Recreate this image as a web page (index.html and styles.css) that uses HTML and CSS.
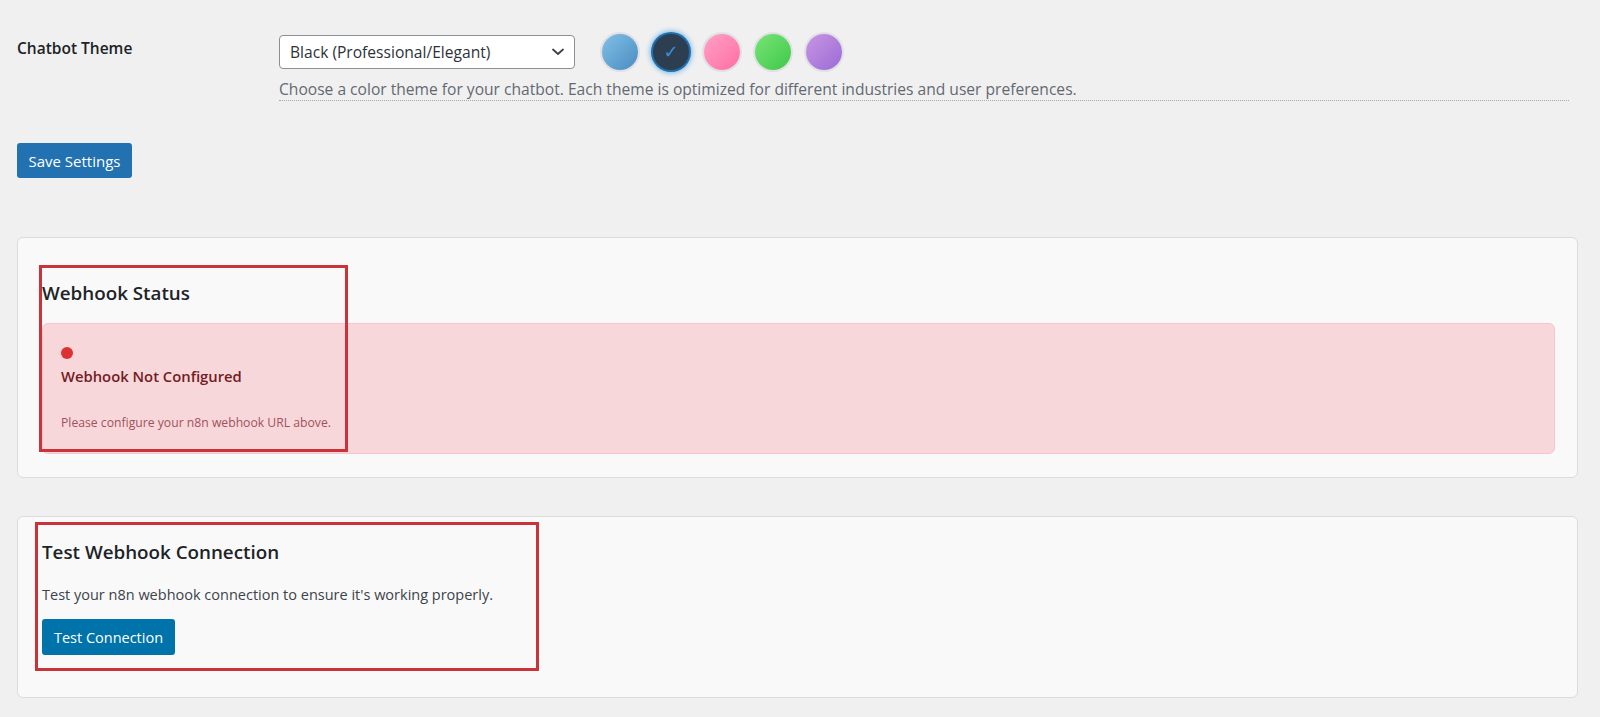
FILE: index.html
```html
<!DOCTYPE html>
<html lang="en">
<head>
<meta charset="utf-8">
<title>Chatbot Settings</title>
<link rel="stylesheet" href="styles.css">
</head>
<body>
<div class="wrap">
  <div class="form-row">
    <div class="label">Chatbot Theme</div>
    <div class="field">
      <div class="controls">
        <div class="select">
          <span>Black (Professional/Elegant)</span>
          <svg class="chev" width="12" height="8" viewBox="0 0 12 8"><path d="M1 1.5 L6 6 L11 1.5" fill="none" stroke="#3c434a" stroke-width="1.8" stroke-linecap="round" stroke-linejoin="round"/></svg>
        </div>
        <div class="swatches">
          <span class="swatch sw-blue"></span>
          <span class="swatch sw-black selected"><span class="check">✓</span></span>
          <span class="swatch sw-pink"></span>
          <span class="swatch sw-green"></span>
          <span class="swatch sw-purple"></span>
        </div>
      </div>
      <p class="description">Choose a color theme for your chatbot. Each theme is optimized for different industries and user preferences.</p>
    </div>
  </div>

  <div class="submit"><button class="btn btn-save">Save Settings</button></div>

  <section class="card card-status">
    <h3 class="card-title first">Webhook Status</h3>
    <div class="alert">
      <span class="dot"></span>
      <div class="alert-title">Webhook Not Configured</div>
      <p class="alert-msg">Please configure your n8n webhook URL above.</p>
    </div>
    <div class="annot annot-1"></div>
  </section>

  <section class="card card-test">
    <h3 class="card-title">Test Webhook Connection</h3>
    <p class="card-desc">Test your n8n webhook connection to ensure it's working properly.</p>
    <button class="btn btn-test">Test Connection</button>
    <div class="annot annot-2"></div>
  </section>
</div>
</body>
</html>
```

FILE: styles.css
```css
* { box-sizing: border-box; }
html, body { margin: 0; padding: 0; }
body {
  background: #f0f0f1;
  font-family: "Open Sans", "Noto Sans", sans-serif;
  color: #1d2327;
  width: 1600px;
  height: 717px;
  overflow: hidden;
}
.wrap {
  padding: 0 22px 0 17px;
}
.form-row {
  display: grid;
  grid-template-columns: 262px 1fr;
  padding-top: 34px;
}
.label {
  font-size: 15.5px;
  font-weight: 600;
  line-height: 20px;
  padding-top: 4px;
  color: #1d2327;
}
.field { margin-right: 9px; }
.controls {
  display: flex;
  align-items: center;
}
.select {
  width: 296px;
  height: 34px;
  border: 1px solid #8c8f94;
  border-radius: 4px;
  background: #fff;
  display: flex;
  align-items: center;
  justify-content: space-between;
  padding: 0 10px 0 10px;
  font-size: 15.6px;
  color: #2c3338;
}
.swatches {
  display: flex;
  gap: 15px;
  margin-left: 27px;
}
.swatch {
  width: 36px;
  height: 36px;
  border-radius: 50%;
  display: flex;
  align-items: center;
  justify-content: center;
  box-shadow: 0 0 0 2px rgba(220,220,225,0.8);
}
.sw-blue { background: linear-gradient(135deg, #80c0e6, #4b8cc2); }
.sw-black { background: #2c3e50; }
.sw-pink { background: linear-gradient(135deg, #ffa1c4, #ff6ea4); }
.sw-green { background: linear-gradient(135deg, #79e378, #3ec948); }
.sw-purple { background: linear-gradient(135deg, #c895e2, #9a6cd6); }
.swatch.selected {
  box-shadow: 0 0 0 2px #1e6fb0, 0 0 5px 3px rgba(52,152,219,0.65);
}
.check {
  color: #3a8fd6;
  font-family: "DejaVu Sans", sans-serif;
  font-size: 18px;
  line-height: 1;
}
.description {
  margin: 9px 0 0;
  font-size: 15.6px;
  line-height: 20px;
  color: #646970;
  border-bottom: 1px dotted #a7aaad;
  padding-bottom: 1px;
}
.submit { padding-top: 42px; }
.btn {
  border: 0;
  border-radius: 3px;
  color: #fff;
  font-family: inherit;
  cursor: pointer;
  padding: 0;
}
.btn-save {
  width: 115px;
  height: 35px;
  background: #2271b1;
  font-size: 15px;
}
.card {
  position: relative;
  background: #f9f9f9;
  border: 1px solid #dcdcde;
  border-radius: 6px;
}
.card-status {
  margin-top: 59px;
  padding: 22px 22px 23px 24px;
}
.card-test {
  margin-top: 38px;
  padding: 22px 22px 42px 24px;
}
.card-title {
  margin: 0;
  font-size: 18.8px;
  font-weight: 600;
  line-height: 26px;
  color: #1d2327;
}
.card-title.first { margin: 20px 0 17px; }
.alert {
  background: #f8d7da;
  border: 1px solid #f5c6cb;
  border-radius: 6px;
  height: 131px;
  padding: 23px 18px 0;
}
.dot {
  display: block;
  width: 12px;
  height: 12px;
  border-radius: 50%;
  background: #dc3232;
}
.alert-title {
  margin-top: 7px;
  font-size: 14.8px;
  font-weight: 600;
  line-height: 20px;
  color: #721c24;
}
.alert-msg {
  margin: 28px 0 0;
  font-size: 12.2px;
  line-height: 18px;
  color: #a0525c;
}
.card-desc {
  margin: 19px 0 0;
  font-size: 14.5px;
  line-height: 22px;
  color: #3c434a;
}
.btn-test {
  display: block;
  margin-top: 13px;
  width: 133px;
  height: 36px;
  background: #0073aa;
  font-size: 14.5px;
}
.annot {
  position: absolute;
  border: 3px solid #c8343a;
  pointer-events: none;
}
.annot-1 { left: 21px; top: 27px; width: 309px; height: 187px; }
.annot-2 { left: 17px; top: 5px; width: 504px; height: 149px; }
```
